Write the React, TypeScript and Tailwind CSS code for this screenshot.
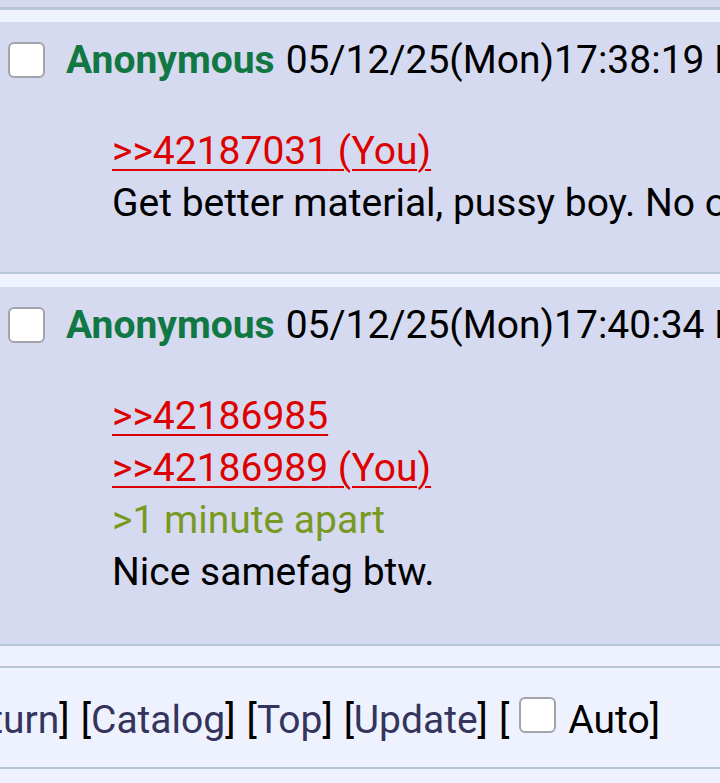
const Box = () => (
  <span className="inline-block h-[36px] w-[37px] shrink-0 rounded-[6px] border-[2.5px] border-[#a3a3ab] bg-white" />
);

type Line = { kind: "quote" | "green" | "text"; text: string; you?: boolean };

type Post = { time: string; lines: Line[]; pb: string };

const posts: Post[] = [
  {
    time: "05/12/25(Mon)17:38:19 No.42187102",
    lines: [
      { kind: "quote", text: ">>42187031", you: true },
      { kind: "text", text: "Get better material, pussy boy. No one is laughing." },
    ],
    pb: "pb-[43px]",
  },
  {
    time: "05/12/25(Mon)17:40:34 No.42187125",
    lines: [
      { kind: "quote", text: ">>42186985" },
      { kind: "quote", text: ">>42186989", you: true },
      { kind: "green", text: ">1 minute apart" },
      { kind: "text", text: "Nice samefag btw." },
    ],
    pb: "pb-[46px]",
  },
];

function Reply({ post }: { post: Post }) {
  return (
    <div className={`border-b-[2px] border-[#b7c5d9] bg-[#d6daf0] pt-[12px] ${post.pb}`}>
      <div className="flex h-[52px] items-center pl-[8px]">
        <Box />
        <span className="ml-[21px] font-bold text-[#117743]">Anonymous</span>
        <span className="ml-[11px] text-black">{post.time}</span>
      </div>
      <div className="mt-[39px] pl-[112px]">
        {post.lines.map((l, i) => {
          if (l.kind === "quote")
            return (
              <div key={i} className="h-[52px]">
                <a className="text-[#dd0000] underline decoration-[1.5px] underline-offset-[5px]">
                  {l.text}
                  {l.you ? " (You)" : ""}
                </a>
              </div>
            );
          if (l.kind === "green")
            return (
              <div key={i} className="h-[52px] text-[#789922]">
                {l.text}
              </div>
            );
          return (
            <div key={i} className="h-[52px] text-black">
              {l.text}
            </div>
          );
        })}
      </div>
    </div>
  );
}

export default function App() {
  const links = ["Return", "Catalog", "Top", "Update"];
  return (
    <div className="h-[783px] w-[720px] overflow-hidden whitespace-nowrap bg-[#eef2ff] font-['Roboto',sans-serif] text-[39px] leading-[52px]">
      <div className="h-[10px] border-b-[3px] border-[#b7c5d9] bg-[#d6daf0]" />
      <div className="mt-[12px] flex flex-col gap-[13px]">
        {posts.map((p, i) => (
          <Reply key={i} post={p} />
        ))}
      </div>
      <div className="mt-[20px] h-[2px] bg-[#b7c5d9]" />
      <div className="flex h-[99px] items-center justify-end pr-[60px] pt-[5px] text-black">
        {links.map((l) => (
          <span key={l} className="mr-[11px]">
            [<a className="text-[#34345c]">{l}</a>]
          </span>
        ))}
        <span className="flex items-center">
          [<span className="ml-[10px] mr-[12px]"><Box /></span>Auto]
        </span>
      </div>
      <div className="h-[2px] bg-[#b7c5d9]" />
    </div>
  );
}
